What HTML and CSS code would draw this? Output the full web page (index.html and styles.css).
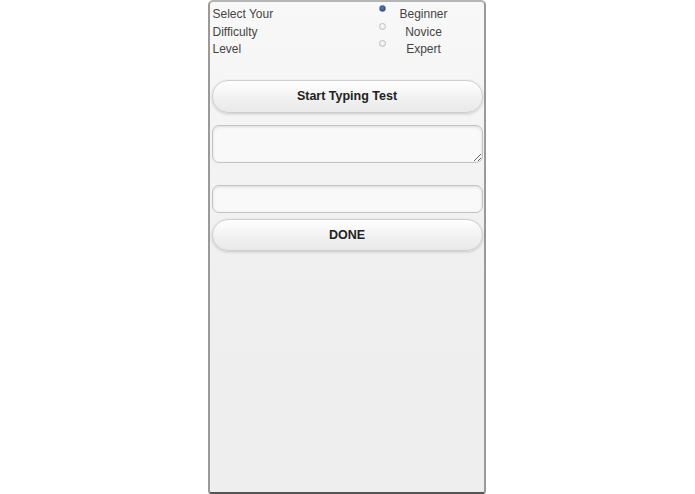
FILE: index.html
```html
<!DOCTYPE html>
<html>
<head>
<meta charset="utf-8">
<title>Typing Test</title>
<link rel="stylesheet" href="styles.css">
</head>
<body>
<div class="device">
  <div class="screen">
    <div class="difficulty">
      <div class="difficulty-label">Select Your Difficulty Level</div>
      <div class="levels">
        <label class="level"><input type="radio" name="level" checked><span>Beginner</span></label>
        <label class="level"><input type="radio" name="level"><span>Novice</span></label>
        <label class="level"><input type="radio" name="level"><span>Expert</span></label>
      </div>
    </div>
    <button class="btn btn-start">Start Typing Test</button>
    <textarea class="field prompt" readonly></textarea>
    <input class="field answer" type="text">
    <button class="btn btn-done">DONE</button>
  </div>
</div>
</body>
</html>
```
FILE: styles.css
```css
html, body {
  margin: 0;
  padding: 0;
  background: #ffffff;
  height: 100%;
}

body {
  display: flex;
  justify-content: center;
  font-family: "Liberation Sans", Arial, sans-serif;
}

.device {
  width: 278px;
  height: 494px;
  box-sizing: border-box;
  margin-right: 2px;
  border: 2px solid #9a9a9a;
  border-top-color: #b5b5b5;
  border-bottom-color: #555;
  border-radius: 5px 5px 3px 3px;
  background: linear-gradient(#f8f8f8, #efefef 60%, #eeeeee);
}

.screen {
  display: flex;
  flex-direction: column;
  padding: 4px 2px 0 2px;
}

.difficulty {
  display: flex;
  padding-left: 1px;
  font-size: 12px;
  line-height: 17.5px;
  color: #454545;
}

.difficulty-label {
  width: 70px;
  margin-right: 96px;
}

.levels {
  display: flex;
  flex-direction: column;
}

.level {
  display: flex;
  align-items: flex-start;
  height: 17.5px;
}

.level input {
  -webkit-appearance: none;
  appearance: none;
  width: 7px;
  height: 7px;
  margin: -1px 0 0 0;
  border-radius: 50%;
  border: 1px solid #c0c0c0;
  background: radial-gradient(circle at 50% 40%, #ffffff, #dedede);
}

.level input:checked {
  border-color: #5a6e8c;
  background: radial-gradient(circle at 45% 40%, #5d7fb2, #223c62);
}

.level span {
  width: 72px;
  margin-left: 2px;
  text-align: center;
}

.btn {
  width: 271px;
  border: 1px solid #cfcfcf;
  border-radius: 16px;
  background: linear-gradient(#ffffff, #f1f1f1 55%, #e9e9e9);
  box-shadow: 0 1px 3px rgba(0, 0, 0, 0.18);
  font-family: "Liberation Sans", Arial, sans-serif;
  font-weight: bold;
  font-size: 12.5px;
  color: #222;
  padding: 0;
  cursor: pointer;
}

.btn-start {
  height: 33px;
  margin-top: 21px;
}

.field {
  width: 271px;
  box-sizing: border-box;
  border: 1px solid #c2c2c2;
  border-radius: 7px;
  background: #f9f9f9;
  box-shadow: inset 0 1px 3px rgba(0, 0, 0, 0.12);
  font-family: "Liberation Sans", Arial, sans-serif;
  font-size: 13px;
  padding: 4px 8px;
  margin: 0;
  outline: none;
}

.prompt {
  height: 38px;
  margin-top: 12px;
  resize: vertical;
}

.answer {
  height: 28px;
  margin-top: 22px;
}

.btn-done {
  height: 32px;
  margin-top: 6px;
}
```
